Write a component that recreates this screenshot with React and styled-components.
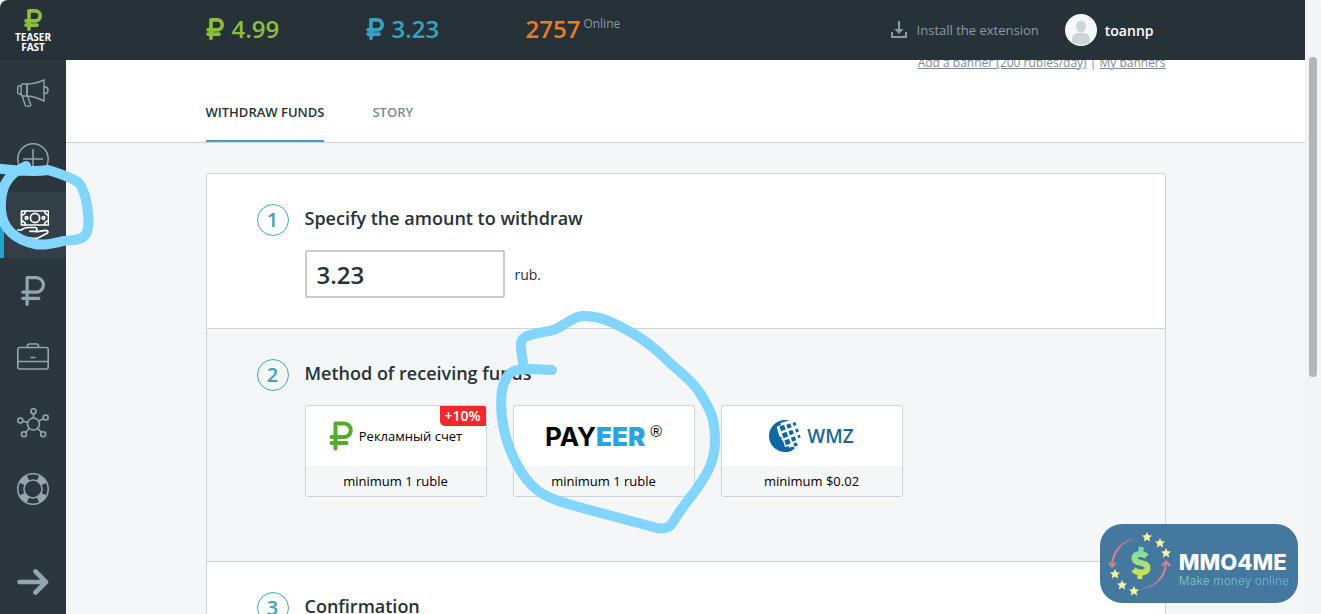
import React from "react";
import styled, { createGlobalStyle } from "styled-components";

const GlobalStyle = createGlobalStyle`
  * {
    box-sizing: border-box;
    margin: 0;
    padding: 0;
  }

  body {
    background: #f4f6f8;
    color: #273238;
    font-family: "Open Sans", "Noto Sans", sans-serif;
    font-size: 13px;
  }

  a {
    color: inherit;
    text-decoration: none;
  }

  svg {
    display: block;
    flex-shrink: 0;
  }
`;

const Ruble = ({ width, height, weight = 3 }) => (
  <svg width={width} height={height} viewBox="0 0 24 30" fill="none" stroke="currentColor"
    strokeWidth={weight} strokeLinecap="round" strokeLinejoin="round">
    <path d="M6.5 27.500V2.500H15a6.800 6.800 0 0 1 0 13.600H2.500M2.500 22h15" />
  </svg>
);

const Megaphone = () => (
  <svg width="32" height="28" viewBox="0 0 32 28" fill="none" stroke="currentColor" strokeWidth="1.4" strokeLinejoin="round">
    <path d="M10 5C17 4.6 22 3.500 27 .8v21.400C22 19 17 17.500 10 17z" />
    <path d="M10 5H6a1.800 1.800 0 0 0-1.800 1.800v8.400A1.800 1.800 0 0 0 6 17h4z" />
    <path d="M4.200 7H2.500A1.800 1.800 0 0 0 .7 8.800v4.400A1.800 1.800 0 0 0 2.500 15h1.700M27 8h1.300c3.600 0 3.600 6.500 0 6.500H27" />
    <path d="M5.200 17l3 9.200c.2.600.6.900 1.200.9h3.400c.8 0 1.200-.6.900-1.300L10.500 17" />
  </svg>
);

const CirclePlus = () => (
  <svg width="32" height="32" viewBox="0 0 32 32" fill="none" stroke="currentColor" strokeWidth="1.5">
    <circle cx="16" cy="16" r="15.2" />
    <path d="M6 16h20M16 6v20" />
  </svg>
);

const MoneyHand = () => (
  <svg width="32" height="30" viewBox="0 0 32 30" fill="none" stroke="currentColor" strokeWidth="1.7"
    strokeLinejoin="round" strokeLinecap="round">
    <rect x="4.500" y="1" width="27" height="14" />
    <circle cx="18" cy="8" r="4.600" />
    <circle cx="9.500" cy="8" r="1.300" />
    <circle cx="26.500" cy="8" r="1.300" />
    <path d="M4.500 5a4 4 0 0 0 4-4M27.500 1a4 4 0 0 0 4 4M4.500 11a4 4 0 0 1 4 4M27.500 15a4 4 0 0 1 4-4" />
    <path d="M1 20h3.500c2-2 4.500-2.500 7-2.500h6.500c2.600 0 2.600 3.800 0 3.800h-5" />
    <path d="M18.500 21.500c4 .6 7-1 10.500-1.200 2.500 0 2.500 2.600.3 3.500-4 1.700-7 4.700-11 4.700-5 0-8-1.500-13.300-1.500H1" />
  </svg>
);

const Briefcase = () => (
  <svg width="32" height="28" viewBox="0 0 32 28" fill="none" stroke="currentColor" strokeWidth="1.600">
    <rect x=".8" y="4.500" width="30.400" height="21.500" rx="2" />
    <path d="M10.500 4.500V3a2 2 0 0 1 2-2h7a2 2 0 0 1 2 2v1.500M1 18.500h30M13.500 14.500h5" />
  </svg>
);

const Network = () => (
  <svg width="32" height="30" viewBox="0 0 32 30" fill="none" stroke="currentColor" strokeWidth="1.600">
    <circle cx="16.500" cy="16" r="6" />
    <circle cx="16.500" cy="3.300" r="2.500" />
    <circle cx="3.300" cy="12.500" r="2.500" />
    <circle cx="28.700" cy="9.500" r="2.500" />
    <circle cx="7" cy="26.200" r="2.500" />
    <circle cx="26.200" cy="26.200" r="2.500" />
    <path d="M16.500 6v4M6 13.200l5 1.300M22 13l4.300-2.200M8.700 24.200l3.700-3.700M24.500 24.200l-3.800-3.700" />
  </svg>
);

const Lifebuoy = () => (
  <svg width="32" height="32" viewBox="0 0 32 32" fill="none" stroke="currentColor">
    <circle cx="16" cy="16" r="15.200" strokeWidth="1.600" />
    <circle cx="16" cy="16" r="9" strokeWidth="1.600" />
    <circle cx="16" cy="16" r="12" strokeWidth="6.600" pathLength="80" strokeDasharray="9 11" strokeDashoffset="-5.500" />
  </svg>
);

const ArrowRight = () => (
  <svg width="32" height="28" viewBox="0 0 32 28" fill="none" stroke="currentColor" strokeWidth="4.600"
    strokeLinecap="round" strokeLinejoin="round">
    <path d="M2.500 14h26M18.500 3.500L29 14 18.500 24.500" />
  </svg>
);

const Download = () => (
  <svg width="16" height="18" viewBox="0 0 16 18" fill="currentColor">
    <path d="M7 0h2v8h3.500L8 13 3.500 8H7z" />
    <path d="M0 11h2v4h12v-4h2v6H0z" />
  </svg>
);

// x, y, size of the tilted squares on the globe
const globeSquares = [
  [13.5, 8, 5], [16, 15, 5], [18.500, 22, 5],
  [20, 6, 4.200], [22.200, 12.500, 4.200], [24.500, 19, 4.200], [26.500, 24.500, 3.600],
  [25.500, 4, 3], [28, 10.500, 3], [30, 16.500, 2.600],
];

const WebMoney = () => (
  <svg width="32" height="32" viewBox="0 0 32 32">
    <circle cx="16" cy="16" r="16" fill="#0f66a4" />
    <path d="M8 6.500l4-1.500-.5-2L22 0h10v32h-7l-1-3.500-3.500 1-1-3.500-3.500 1-2-6.500-1.500-.5L12.500 17l-2-.5-2-6.500z" fill="#fff" />
    <path d="M16 32c4 0 7.500-1.500 10-4l-2.500-1.500-8 3z" fill="#0f66a4" />
    {globeSquares.map(([x, y, size]) => (
      <rect key={`${x}-${y}`} x={-size / 2} y={-size / 2} width={size} height={size} fill="#0f66a4"
        transform={`translate(${x} ${y}) rotate(-20)`} />
    ))}
  </svg>
);

const STAR = "M0-5L1.500-1.800 5-1.500 2.400.9 3.200 4.400 0 2.600-3.200 4.400-2.400.9-5-1.500-1.500-1.800z";
const stars = [[38, 8], [51, 14], [57, 24], [6, 45], [13, 56], [25, 62]];

const DollarBadge = () => (
  <svg width="62" height="70" viewBox="0 0 62 70" fill="none">
    <defs>
      <linearGradient id="dollar" gradientUnits="userSpaceOnUse" x1="0" y1="18" x2="0" y2="50">
        <stop offset="0" stopColor="#6fe0b0" />
        <stop offset="1" stopColor="#dce04a" />
      </linearGradient>
      <linearGradient id="arcLeft" x1="0" y1="1" x2="1" y2="0">
        <stop offset="0.3" stopColor="#dd7f92" />
        <stop offset="1" stopColor="#dd7f92" stopOpacity="0.1" />
      </linearGradient>
      <linearGradient id="arcRight" x1="1" y1="0" x2="0" y2="1">
        <stop offset="0.3" stopColor="#dd7f92" />
        <stop offset="1" stopColor="#dd7f92" stopOpacity="0.1" />
      </linearGradient>
    </defs>
    <path d="M28 9C14 11 4 22 3 36" stroke="url(#arcLeft)" strokeWidth="2" />
    <path d="M-.5 33L3 37.500 7 34" stroke="#dd7f92" strokeWidth="2" />
    <path d="M32 60C47 58 57 47 57 33" stroke="url(#arcRight)" strokeWidth="2" />
    <path d="M53 36.500L57 32.500 61 37" stroke="#dd7f92" strokeWidth="2" />
    {stars.map(([x, y]) => (
      <path key={x} d={STAR} transform={`translate(${x} ${y})`} fill="#fbf3a0" />
    ))}
    <path d="M37.500 27.500c-2-2-4-2.500-6-2.500-3.500 0-6 1.500-6 4.300 0 6.200 13 3 13 9.500 0 3-2.500 4.700-6.500 4.700-3 0-5.500-1-7.500-3"
      stroke="url(#dollar)" strokeWidth="6" />
    <path d="M32.500 18l-1 6h-.5M31.500 44l-1 6" stroke="url(#dollar)" strokeWidth="5" />
  </svg>
);

const menu = [
  { label: "Advertising", icon: <Megaphone /> },
  { label: "Add funds", icon: <CirclePlus /> },
  { label: "Withdraw funds", icon: <MoneyHand />, active: true },
  { label: "Earnings", icon: <Ruble width={26} height={32} weight={3} /> },
  { label: "Portfolio", icon: <Briefcase /> },
  { label: "Referrals", icon: <Network /> },
  { label: "Support", icon: <Lifebuoy /> },
];

const App = () => {
  return (
    <Page>
      <GlobalStyle />
      <Layout>
        <Header>
          <Logo href="#">
            <Ruble width={18} height={22} weight={5} />
            <span>TEASER<br />FAST</span>
          </Logo>
          <HeaderInner>
            <Stat color="#8abf3c"><Ruble width={18} height={22} weight={5} />4.99</Stat>
            <Stat color="#35a3c4"><Ruble width={18} height={22} weight={5} />3.23</Stat>
            <Stat color="#e67e22">
              <Online>2757<small>Online</small></Online>
            </Stat>
            <Account>
              <Extension href="#"><Download />Install the extension</Extension>
              <User href="#">
                <Avatar viewBox="0 0 32 32">
                  <circle cx="16" cy="16" r="16" fill="#f5f8fa" />
                  <ellipse cx="16" cy="12.500" rx="5" ry="6" fill="#cbd5dc" />
                  <path d="M7 28v-3a6 6 0 0 1 6-6h6a6 6 0 0 1 6 6v3a15 15 0 0 1-18 0z" fill="#cbd5dc" />
                </Avatar>
                toannp
              </User>
            </Account>
          </HeaderInner>
        </Header>

        <Body>
          <Sidebar>
            {menu.map((item) => (
              <MenuItem key={item.label} href="#" aria-label={item.label} $active={item.active}>
                {item.icon}
              </MenuItem>
            ))}
            <Expand type="button" aria-label="Expand menu"><ArrowRight /></Expand>
          </Sidebar>

          <Main>
            <TopBar>
              <Container>
                <Banners>
                  <a href="#">Add a banner (200 rubles/day)</a> | <a href="#">My banners</a>
                </Banners>
                <Tabs>
                  <Tab href="#" $active>WITHDRAW FUNDS</Tab>
                  <Tab href="#">STORY</Tab>
                </Tabs>
              </Container>
            </TopBar>

            <Container>
              <Card>
                <Step>
                  <StepNumber>1</StepNumber>
                  <div>
                    <StepTitle as="label" htmlFor="amount">Specify the amount to withdraw</StepTitle>
                    <AmountRow>
                      <AmountInput id="amount" type="text" defaultValue="3.23" />
                      <span>rub.</span>
                    </AmountRow>
                  </div>
                </Step>

                <Step $shaded>
                  <StepNumber>2</StepNumber>
                  <div>
                    <StepTitle>Method of receiving funds</StepTitle>
                    <Methods>
                      <Method type="button">
                        <Bonus>+10%</Bonus>
                        <MethodLogo>
                          <AdAccount>
                            <Ruble width={24} height={30} weight={4} />
                            <span>Рекламный счет</span>
                          </AdAccount>
                        </MethodLogo>
                        <Minimum>minimum 1 ruble</Minimum>
                      </Method>
                      <Method type="button">
                        <MethodLogo>
                          <Payeer>PAY<b>EER</b><sup>®</sup></Payeer>
                        </MethodLogo>
                        <Minimum>minimum 1 ruble</Minimum>
                      </Method>
                      <Method type="button">
                        <MethodLogo>
                          <Wmz><WebMoney />WMZ</Wmz>
                        </MethodLogo>
                        <Minimum>minimum $0.02</Minimum>
                      </Method>
                    </Methods>
                  </div>
                </Step>

                <Step>
                  <StepNumber>3</StepNumber>
                  <StepTitle>Confirmation</StepTitle>
                </Step>
              </Card>
            </Container>
          </Main>
        </Body>
      </Layout>

      <Scrollbar><Thumb /></Scrollbar>

      {/* hand drawn marker lines */}
      <Marker width="730" height="550" viewBox="0 0 730 550">
        <path d="M-6 168C10 170 35 172 48 170C58 173 70 177 78 182C88 193 89 220 88 228C86 240 78 240 63 241C55 243 45 246 35 244C15 240 2 228 1 210C0 190 5 175 26 166" />
        <path d="M552 370L530 369C515 369 509 371 505 381C500 390 500 410 504 430C510 455 522 478 537 490C550 501 580 507 597 512L657 528C663 529 668 528 671 525C678 514 687 501 693 494C705 477 714 465 715 443C715 420 712 412 700 393C690 378 680 373 667 360C655 348 640 337 627 330C610 321 597 315 582 316C570 318 563 327 553 330C540 334 522 333 521 343C520 350 523 356 523 365" />
      </Marker>

      <Watermark>
        <DollarBadge />
        <WatermarkText>
          <strong>MMO4ME</strong>
          <span>Make money online</span>
        </WatermarkText>
      </Watermark>
    </Page>
  );
};

const Page = styled.div`
  position: relative;
  display: flex;
  height: 100vh;
  overflow: hidden;
`;

const Layout = styled.div`
  flex: 1;
  min-width: 0;
  display: flex;
  flex-direction: column;
`;

const Header = styled.header`
  z-index: 1;
  display: flex;
  flex-shrink: 0;
  height: 60px;
  background: #273238;
  border-top-left-radius: 8px;
`;

const Logo = styled.a`
  width: 66px;
  display: flex;
  flex-direction: column;
  align-items: center;
  padding-top: 9px;
  color: #8abf3c;

  span {
    margin-top: 1px;
    color: #fff;
    font-size: 10px;
    font-weight: 700;
    line-height: 10px;
    text-align: center;
  }
`;

const Container = styled.div`
  width: 100%;
  max-width: 960px;
  margin: 0 auto;
`;

const HeaderInner = styled(Container)`
  display: flex;
  align-items: center;
`;

const Stat = styled.div`
  width: 160px;
  display: flex;
  align-items: center;
  gap: 8px;
  padding-bottom: 2px;
  color: ${({ color }) => color};
  font-size: 24px;
  font-weight: 600;
  line-height: 32px;
`;

const Online = styled.div`
  display: flex;
  align-items: flex-start;

  small {
    margin-left: 3px;
    color: #8a9ba5;
    font-size: 12px;
    font-weight: 400;
    line-height: 22px;
  }
`;

const Account = styled.div`
  display: flex;
  align-items: center;
  gap: 26px;
  margin-left: auto;
  padding-right: 12px;
`;

const Extension = styled.a`
  display: flex;
  align-items: center;
  gap: 10px;
  color: #8a9ba5;
`;

const User = styled.a`
  display: flex;
  align-items: center;
  gap: 8px;
  color: #fff;
  font-size: 14px;
  font-weight: 600;
`;

const Avatar = styled.svg`
  width: 32px;
  height: 32px;
`;

const Body = styled.div`
  flex: 1;
  min-height: 0;
  display: flex;
`;

const Sidebar = styled.nav`
  width: 66px;
  flex-shrink: 0;
  display: flex;
  flex-direction: column;
  background: #2c373d;
`;

const MenuItem = styled.a`
  height: 66px;
  display: flex;
  align-items: center;
  justify-content: center;
  color: ${({ $active }) => ($active ? "#fff" : "#93a5b0")};
  background: ${({ $active }) => ($active ? "#333f46" : "none")};
  box-shadow: ${({ $active }) => ($active ? "inset 4px 0 #22a7c9" : "none")};
`;

const Expand = styled.button`
  height: 64px;
  margin-top: auto;
  display: flex;
  align-items: center;
  justify-content: center;
  border: none;
  background: none;
  color: #93a5b0;
`;

const Main = styled.main`
  flex: 1;
  min-width: 0;
  overflow: hidden;
`;

const TopBar = styled.div`
  margin-top: -7px;
  background: #fff;
  border-bottom: 1px solid #c9d4dc;
`;

const Banners = styled.div`
  color: #7b8b96;
  font-size: 12px;
  line-height: 20px;
  text-align: right;

  a {
    text-decoration: underline;
  }
`;

const Tabs = styled.div`
  display: flex;
  gap: 48px;
  margin-top: 9px;
`;

const Tab = styled.a`
  height: 60px;
  line-height: 60px;
  font-weight: 600;
  color: ${({ $active }) => ($active ? "#273238" : "#7b8b96")};
  border-bottom: 2px solid ${({ $active }) => ($active ? "#3fa3b9" : "transparent")};
`;

const Card = styled.section`
  margin-top: 30px;
  background: #fff;
  border: 1px solid #c9d4dc;
  border-radius: 3px;
`;

const Step = styled.div`
  display: flex;
  align-items: flex-start;
  gap: 16px;
  padding: 30px 50px ${({ $shaded }) => ($shaded ? "64px" : "30px")};
  background: ${({ $shaded }) => ($shaded ? "#f4f6f8" : "none")};

  & + & {
    border-top: 1px solid #c9d4dc;
  }
`;

const StepNumber = styled.span`
  width: 32px;
  height: 32px;
  border: 1px solid #3fa9b8;
  border-radius: 50%;
  color: #3fa3b9;
  font-size: 20px;
  font-weight: 600;
  line-height: 30px;
  text-align: center;
`;

const StepTitle = styled.h2`
  display: block;
  font-size: 18px;
  font-weight: 600;
  line-height: 28px;
`;

const AmountRow = styled.div`
  display: flex;
  align-items: center;
  gap: 10px;
  margin-top: 18px;
  font-size: 14px;
`;

const AmountInput = styled.input`
  width: 200px;
  height: 48px;
  padding: 0 10px;
  border: 2px solid #c8cccd;
  border-radius: 2px;
  background: #fff;
  color: #273238;
  font-family: inherit;
  font-size: 24px;
  font-weight: 600;
`;

const Methods = styled.div`
  display: flex;
  flex-wrap: wrap;
  gap: 26px;
  margin-top: 18px;
`;

const Method = styled.button`
  position: relative;
  width: 182px;
  border: 1px solid #c9d4dc;
  border-radius: 3px;
  background: #fff;
  color: #000;
  font-family: inherit;
  font-size: 13px;
`;

const MethodLogo = styled.div`
  height: 60px;
  display: flex;
  align-items: center;
  justify-content: center;
`;

const Minimum = styled.div`
  height: 30px;
  line-height: 30px;
  background: #f4f6f8;
`;

const Bonus = styled.span`
  position: absolute;
  top: 0;
  right: 0;
  padding: 0 5px 0 4px;
  border-radius: 0 2px 0 5px;
  background: #ee2a2d;
  color: #fff;
  font-size: 14px;
  font-weight: 600;
  line-height: 20px;
`;

const AdAccount = styled.span`
  display: flex;
  align-items: center;
  gap: 6px;
  color: #54ac2c;

  span {
    color: #000;
  }
`;

const Payeer = styled.span`
  display: flex;
  align-items: center;
  font-family: Inter, sans-serif;
  font-size: 26px;
  font-weight: 700;

  b {
    color: #26a5e0;
  }

  sup {
    margin: 0 0 8px 5px;
    font-family: "Liberation Sans", sans-serif;
    font-size: 16px;
    font-weight: 400;
    line-height: 16px;
  }
`;

const Wmz = styled.span`
  display: flex;
  align-items: center;
  gap: 6px;
  color: #16669b;
  font-size: 19px;
  font-weight: 600;
`;

const Scrollbar = styled.div`
  width: 16px;
  padding: 57px 4px 0;
  background: #f3f4f5;
  border-top-right-radius: 8px;
`;

const Thumb = styled.div`
  height: 320px;
  border-radius: 4px;
  background: #b5b5b5;
`;

const Marker = styled.svg`
  position: absolute;
  top: 0;
  left: 0;
  z-index: 2;
  fill: none;
  stroke: #82d5ff;
  stroke-width: 10px;
  stroke-linecap: round;
  stroke-linejoin: round;
  pointer-events: none;
`;

const Watermark = styled.div`
  position: absolute;
  right: 23px;
  bottom: 11px;
  z-index: 2;
  display: flex;
  align-items: center;
  gap: 8px;
  padding: 0 9px;
  height: 79px;
  border-radius: 22px;
  background: rgba(57, 112, 153, 0.94);
`;

const WatermarkText = styled.div`
  display: flex;
  flex-direction: column;
  padding-top: 12px;
  font-family: Inter, sans-serif;

  strong {
    color: #fff;
    font-size: 22px;
    font-weight: 800;
    line-height: 22px;
  }

  span {
    background: linear-gradient(90deg, #7cc8a8, #62a4dc);
    background-clip: text;
    color: transparent;
    font-size: 12px;
    line-height: 16px;
  }
`;

export default App;
